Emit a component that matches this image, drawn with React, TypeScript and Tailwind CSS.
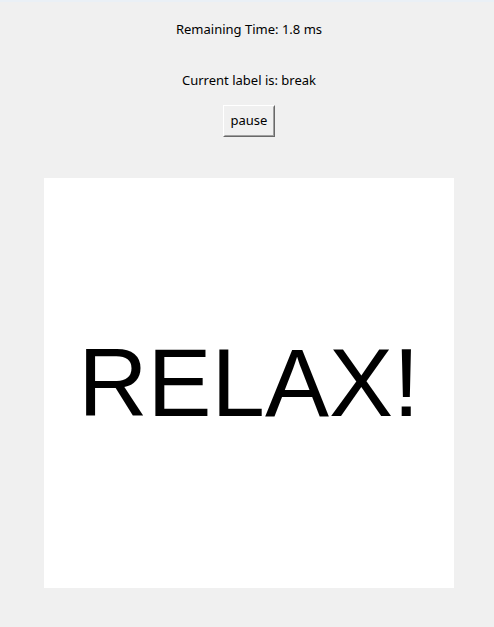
export default function App() {
  const ui = { fontFamily: '"Noto Sans", "Open Sans", sans-serif' };
  return (
    <div className="relative h-[627px] w-[494px] overflow-hidden bg-[#f0f0f0]">
      <div className="h-[2px] bg-[#eaf0f6]" />
      <div className="flex flex-col items-center pl-[4px]" style={ui}>
        <p className="mt-[18px] h-[18px] text-[13px] leading-[18px] text-black">Remaining Time: 1.8 ms</p>
        <p className="mt-[33px] h-[18px] text-[13px] leading-[18px] text-black">Current label is: break</p>
        <button className="mt-[16px] border border-t-white border-l-white border-b-[#696969] border-r-[#696969]">
          <span className="block h-[30px] w-[50px] border border-t-[#f0f0f0] border-l-[#f0f0f0] border-b-[#a0a0a0] border-r-[#a0a0a0] bg-[#f0f0f0] text-[13px] leading-[27px] text-black">
            pause
          </span>
        </button>
      </div>
      <div className="ml-[44px] mt-[41px] flex h-[410px] w-[410px] items-center justify-center bg-white">
        <span className="text-[96px] leading-none text-black" style={{ fontFamily: '"Liberation Sans", Arial, sans-serif' }}>
          RELAX!
        </span>
      </div>
    </div>
  );
}
